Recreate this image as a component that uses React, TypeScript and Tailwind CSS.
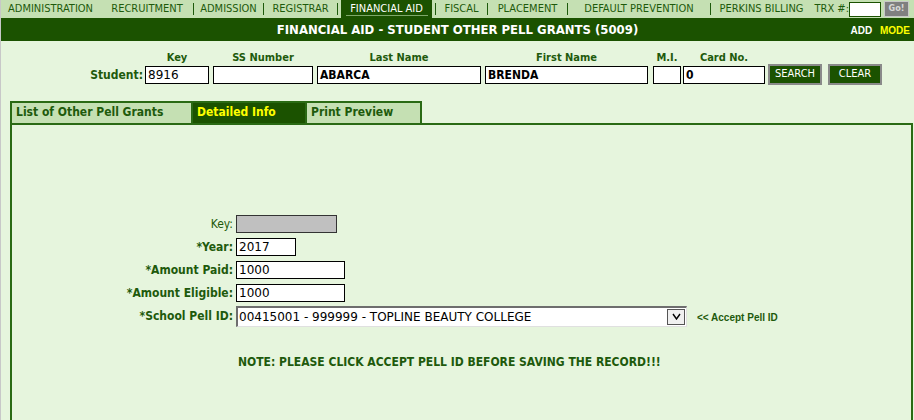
const green = 'text-[#1e5a0c]'

type NavCell = { label?: string; w: string; active?: boolean; sep?: boolean }

const navCells: NavCell[] = [
  { label: 'ADMINISTRATION', w: 'w-[101px]' },
  { label: 'RECRUITMENT', w: 'w-[92px]' },
  { sep: true, w: 'w-[1px]' },
  { label: 'ADMISSION', w: 'w-[69px]' },
  { sep: true, w: 'w-[1px]' },
  { label: 'REGISTRAR', w: 'w-[73px]' },
  { sep: true, w: 'w-[1px]' },
  { label: 'FINANCIAL AID', w: 'w-[97px]', active: true },
  { sep: true, w: 'w-[1px]' },
  { label: 'FISCAL', w: 'w-[51px]' },
  { sep: true, w: 'w-[1px]' },
  { label: 'PLACEMENT', w: 'w-[79px]' },
  { sep: true, w: 'w-[1px]' },
  { label: 'DEFAULT PREVENTION', w: 'w-[142px]' },
  { sep: true, w: 'w-[1px]' },
  { label: 'PERKINS BILLING', w: 'w-[101px]' },
]

const studentCols = [
  { head: 'Key', w: 'w-[64px]', ml: 'ml-0', value: '8916', bold: false },
  { head: 'SS Number', w: 'w-[100px]', ml: 'ml-[4px]', value: '', bold: false },
  { head: 'Last Name', w: 'w-[164px]', ml: 'ml-[4px]', value: 'ABARCA', bold: true },
  { head: 'First Name', w: 'w-[163px]', ml: 'ml-[4px]', value: 'BRENDA', bold: true },
  { head: 'M.I.', w: 'w-[28px]', ml: 'ml-[5px]', value: '', bold: false },
  { head: 'Card No.', w: 'w-[82px]', ml: 'ml-[2px]', value: '0', bold: true },
]

function TextBox({ w, value, bold, gray }: { w: string; value: string; bold?: boolean; gray?: boolean }) {
  return (
    <div
      className={`${w} h-[18px] border ${gray ? 'border-[#333] bg-[#c0c0c0]' : 'border-black bg-white'} px-[2px] leading-[16px] text-black overflow-hidden whitespace-nowrap ${
        bold ? 'font-bold text-[12px]' : "text-[12px] font-['DejaVu_Sans',sans-serif]"
      }`}
    >
      {value}
    </div>
  )
}

function FormRow({ label, bold, children }: { label: string; bold?: boolean; children: React.ReactNode }) {
  return (
    <div className="flex items-center h-[23px]">
      <div className={`w-[235px] text-right pr-[3px] text-[12px] ${green} ${bold ? 'font-bold' : ''}`}>{label}</div>
      {children}
    </div>
  )
}

export default function App() {
  return (
    <div className="w-[914px] h-[420px] overflow-hidden bg-[#e6f5dd] font-['Tahoma','DejaVu_Sans_Condensed','DejaVu_Sans',sans-serif] border-l border-[#c8c8c8]">
      {/* top nav */}
      <div className="flex items-center h-[18px] bg-[#c5e0b3] text-[11px] text-[#1e5a0c] -ml-[1px]">
        {navCells.map((n, i) =>
          n.sep ? (
            <div key={i} className="w-[1px] h-[12px] bg-[#1e5a0c]" />
          ) : n.active ? (
            <div key={i} className={`${n.w} h-full flex items-center px-[3px]`}>
              <div className="w-full h-full bg-[#1b5200] text-white flex items-center justify-center">
                <span className="w-[82px] text-center border-b border-[#7fa86a] leading-[13px]">{n.label}</span>
              </div>
            </div>
          ) : (
            <div key={i} className={`${n.w} text-center whitespace-nowrap`}>
              {n.label}
            </div>
          )
        )}
        <div className="w-[37px] text-right whitespace-nowrap">TRX #:</div>
        <div className="w-[32px] h-[15px] bg-white border border-[#1b5200]" />
        <div className="ml-[3px] w-[25px] h-[16px] bg-[#808080] border border-[#c8c8c8] text-[9px] font-bold text-[#d8d8d8] flex items-center justify-center">
          Go!
        </div>
      </div>

      {/* title bar */}
      <div className="relative h-[23px] bg-[#1b5200] flex items-center justify-center text-white font-bold text-[13px]">
        FINANCIAL AID - STUDENT OTHER PELL GRANTS (5009)
        <div className="absolute right-[4px] top-[5px] text-[10px] font-['Liberation_Sans',Arial,sans-serif] font-bold">
          ADD <span className="ml-[5px] text-[#ffff00]">MODE</span>
        </div>
      </div>

      {/* student search */}
      <div className={`flex items-end pt-[11px] ${green}`}>
        <div className="w-[144px] text-right pr-[2px] text-[12px] font-bold h-[18px] leading-[18px]">Student:</div>
        {studentCols.map((c) => (
          <div key={c.head} className={`flex flex-col items-center ${c.ml}`}>
            <div className="text-[11px] font-bold leading-[12px] mb-[2px] whitespace-nowrap">{c.head}</div>
            <TextBox w={c.w} value={c.value} bold={c.bold} />
          </div>
        ))}
        <button className="ml-[3px] mb-[-1px] w-[54px] h-[21px] bg-[#1b5200] text-white text-[11px] border-2 border-[#8a8a8a]">
          SEARCH
        </button>
        <button className="ml-[6px] mb-[-1px] w-[54px] h-[21px] bg-[#1b5200] text-white text-[11px] border-2 border-[#8a8a8a]">
          CLEAR
        </button>
      </div>

      {/* tabs */}
      <div className="mt-[17px] ml-[9px] flex h-[22px] text-[12px] font-bold">
        <div className={`w-[183px] bg-[#c5e0b3] border-2 border-b-0 border-[#2a6a14] pl-[4px] leading-[19px] ${green}`}>
          List of Other Pell Grants
        </div>
        <div className="w-[114px] bg-[#1b5200] border-2 border-b-0 border-l-0 border-[#2a6a14] pl-[4px] leading-[19px] text-[#ffff00]">
          Detailed Info
        </div>
        <div className={`w-[115px] bg-[#c5e0b3] border-2 border-b-0 border-l-0 border-[#2a6a14] pl-[4px] leading-[19px] ${green}`}>
          Print Preview
        </div>
      </div>

      {/* panel */}
      <div className="ml-[9px] mr-[1px] h-[400px] border-2 border-[#2a6a14] bg-[#e6f5dd] pt-[87px]">
        <div className="-ml-[11px]">
          <FormRow label="Key:">
            <TextBox w="w-[101px]" value="" gray />
          </FormRow>
          <FormRow label="*Year:" bold>
            <TextBox w="w-[60px]" value="2017" />
          </FormRow>
          <FormRow label="*Amount Paid:" bold>
            <TextBox w="w-[109px]" value="1000" />
          </FormRow>
          <FormRow label="*Amount Eligible:" bold>
            <TextBox w="w-[109px]" value="1000" />
          </FormRow>
          <div className="flex items-center h-[24px]">
            <div className={`w-[235px] text-right pr-[3px] text-[12px] font-bold ${green}`}>*School Pell ID:</div>
            <div className="w-[451px] h-[21px] bg-white border-t-2 border-l-2 border-[#6e6e6e] border-r border-b border-r-[#e0e0e0] border-b-[#e0e0e0] flex items-center text-[12px] font-['DejaVu_Sans',sans-serif] text-black pl-[1px]">
              <span className="flex-1 whitespace-nowrap">00415001 - 999999 - TOPLINE BEAUTY COLLEGE</span>
              <div className="w-[18px] h-[16px] border border-[#555] bg-[#f0f0f0] flex items-center justify-center mr-[1px]">
                <svg width="9" height="7" viewBox="0 0 9 7">
                  <path d="M1 1 L4.5 6 L8 1" stroke="#000" strokeWidth="1.4" fill="none" />
                </svg>
              </div>
            </div>
            <span className={`ml-[10px] mt-[3px] text-[10px] font-bold font-['Liberation_Sans',Arial,sans-serif] ${green}`}>
              &lt;&lt; Accept Pell ID
            </span>
          </div>
          <div className={`mt-[25px] ml-[237px] text-[12px] font-bold ${green}`}>
            NOTE: PLEASE CLICK ACCEPT PELL ID BEFORE SAVING THE RECORD!!!
          </div>
        </div>
      </div>
    </div>
  )
}
